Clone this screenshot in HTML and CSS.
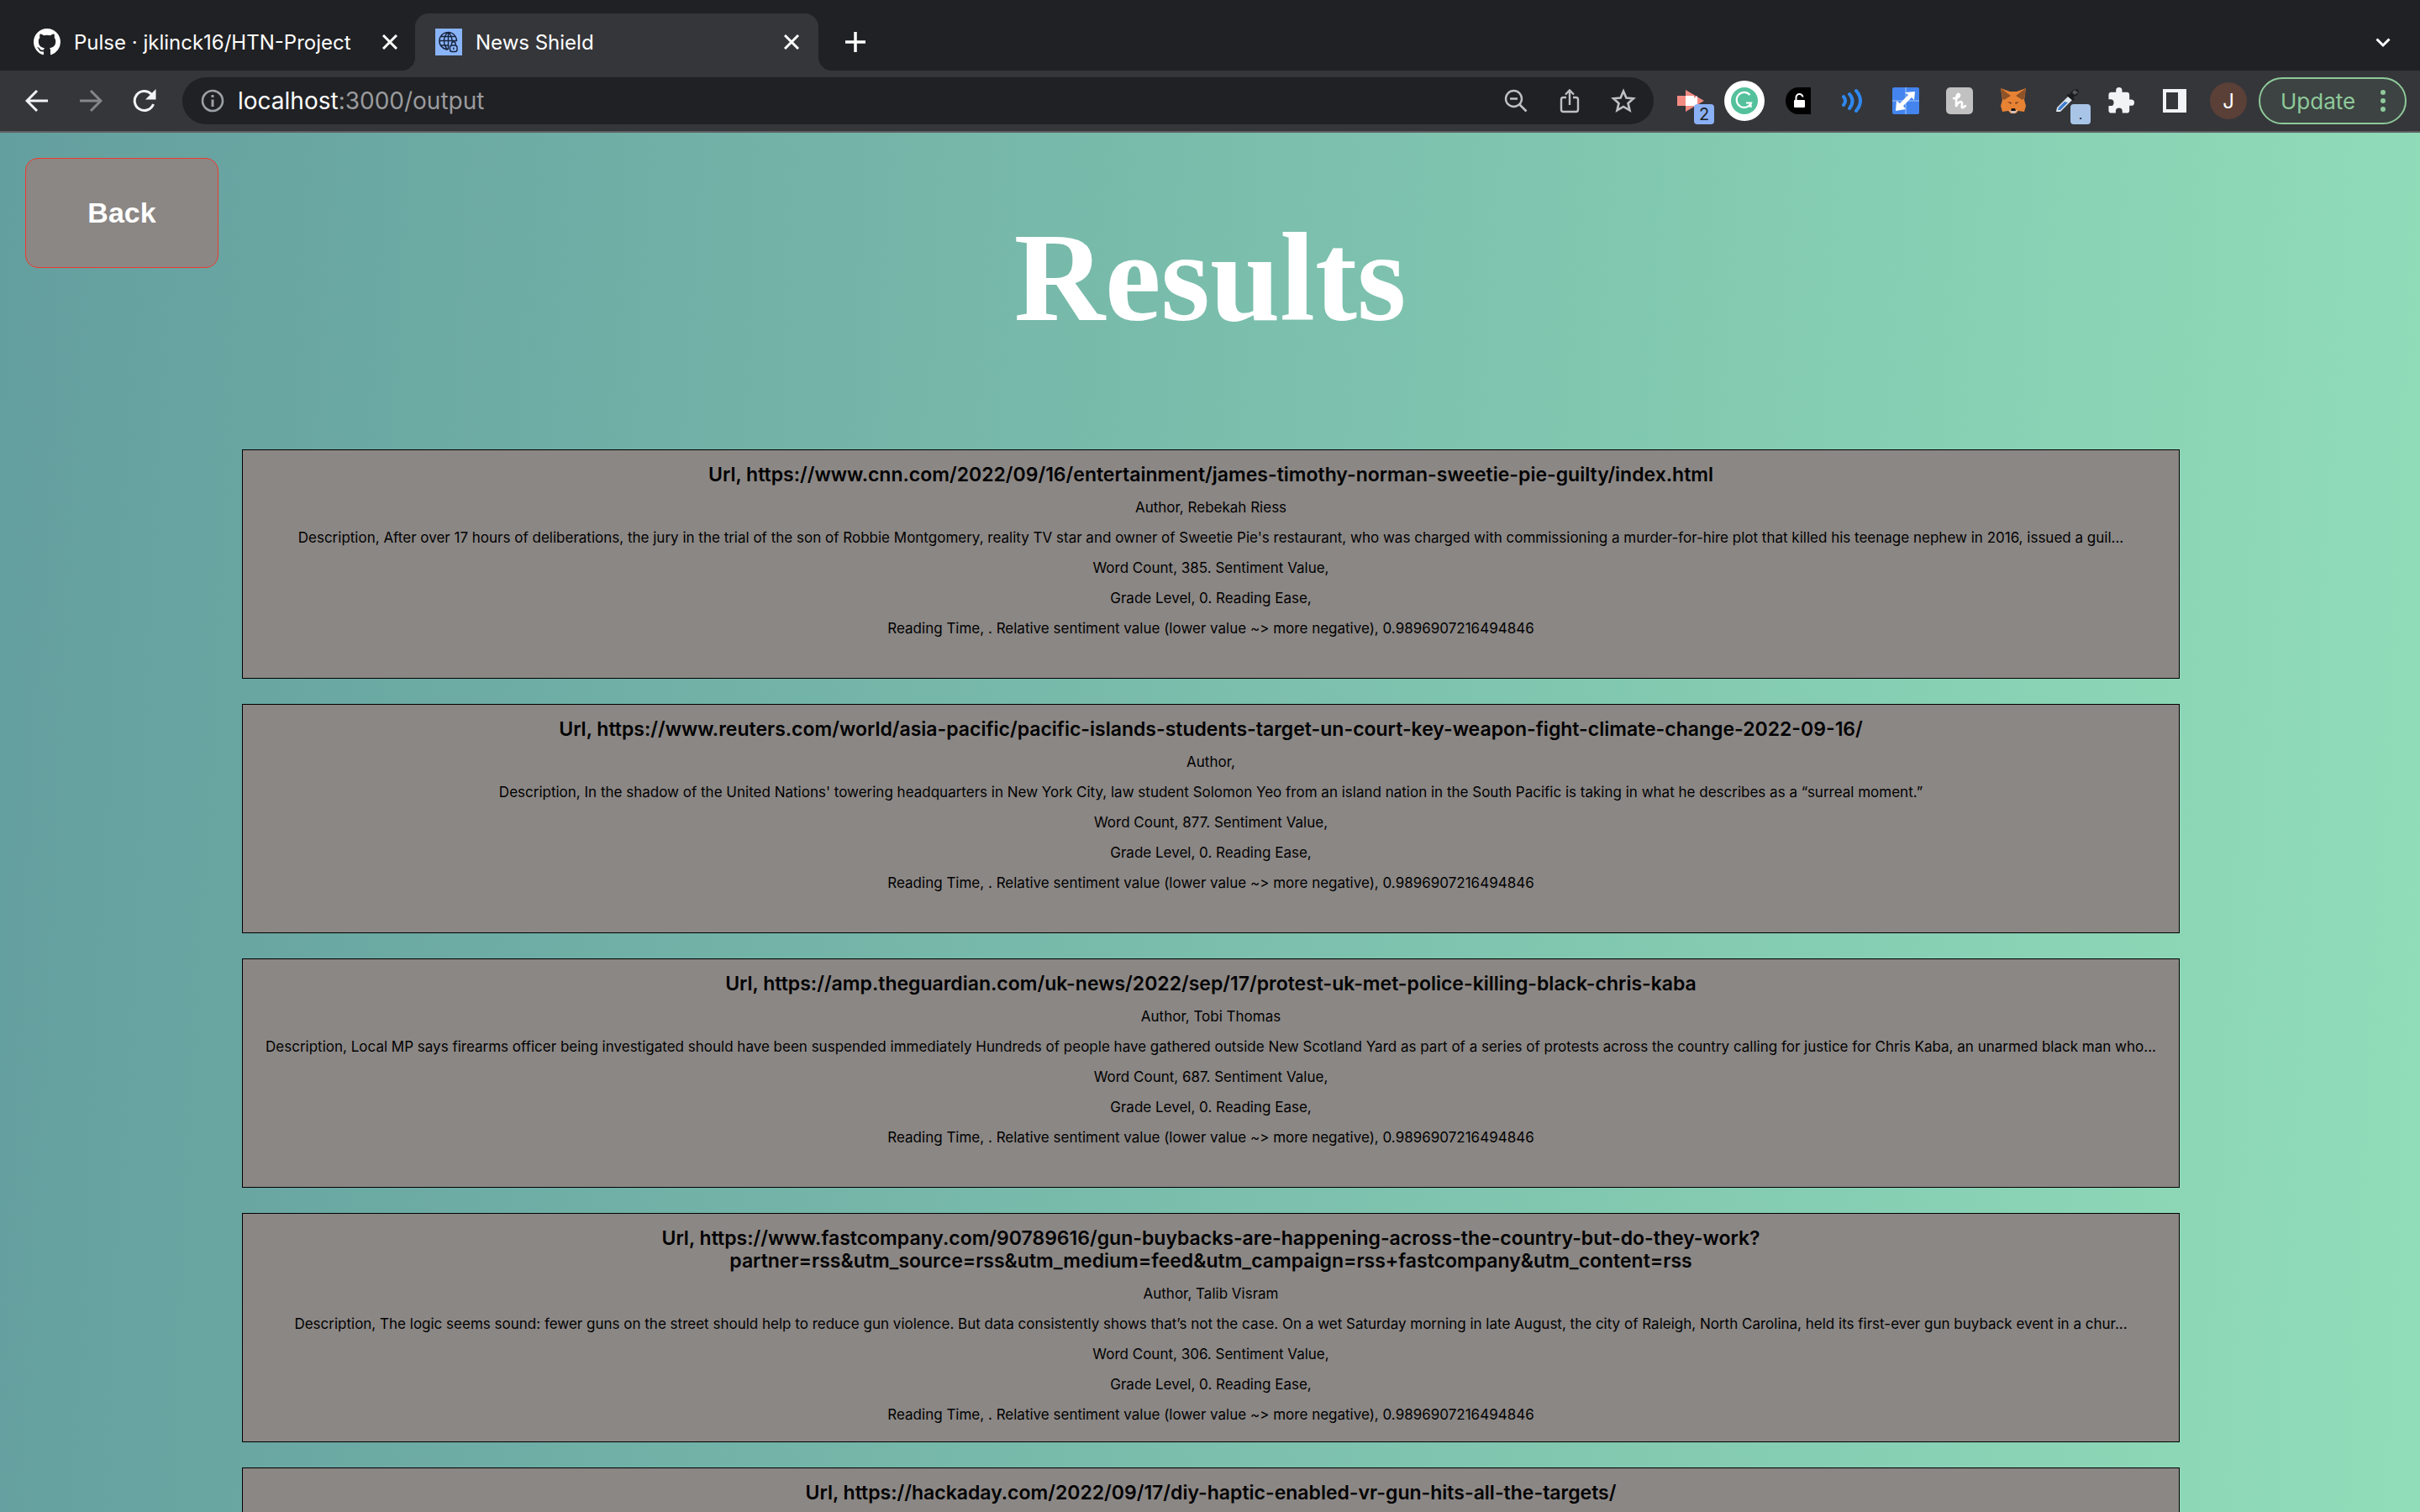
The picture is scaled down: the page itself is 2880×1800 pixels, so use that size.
FILE: index.html
```html
<!DOCTYPE html>
<html lang="en">
<head>
<meta charset="utf-8">
<title>News Shield</title>
<link rel="stylesheet" href="styles.css">
</head>
<body>
<header class="browser">
  <nav class="tabs" aria-label="Tabs">
    <div class="tab">
      <svg class="favicon" viewBox="0 0 16 16" fill="#fff"><path d="M8 0C3.58 0 0 3.58 0 8c0 3.54 2.29 6.53 5.47 7.59.4.07.55-.17.55-.38 0-.19-.01-.82-.01-1.49-2.01.37-2.53-.49-2.69-.94-.09-.23-.48-.94-.82-1.13-.28-.15-.68-.52-.01-.53.63-.01 1.08.58 1.23.82.72 1.21 1.87.87 2.33.66.07-.52.28-.87.51-1.07-1.78-.2-3.64-.89-3.64-3.95 0-.87.31-1.59.82-2.15-.08-.2-.36-1.02.08-2.12 0 0 .67-.21 2.2.82.64-.18 1.32-.27 2-.27s1.36.09 2 .27c1.53-1.04 2.2-.82 2.2-.82.44 1.1.16 1.92.08 2.12.51.56.82 1.27.82 2.15 0 3.07-1.87 3.75-3.65 3.95.29.25.54.73.54 1.48 0 1.07-.01 1.93-.01 2.2 0 .21.15.46.55.38A8.01 8.01 0 0 0 16 8c0-4.42-3.58-8-8-8z"/></svg>
      <span class="tab-title">Pulse · jklinck16/HTN-Project</span>
      <button class="icon-button" aria-label="Close tab"><svg width="18" height="18" viewBox="0 0 18 18"><path d="M1 1l16 16M17 1L1 17" stroke="#fff" stroke-width="3"/></svg></button>
    </div>
    <div class="tab tab-active">
      <svg class="favicon" viewBox="0 0 32 32"><rect width="32" height="32" fill="#8ab4f8"/><g fill="none" stroke="#16233c" stroke-width="1.4"><path d="M25.500 15A10.300 10.300 0 1 0 15 25M15.500 4.500V25M5 14.500h20.500M7 9.500h17M7 20h9.500M15 4.500c-6 5-6 15.500 0 20.500M15.500 4.500c3.500 3 4.500 6 4.500 11"/><rect x="17.500" y="20" width="8.500" height="7.500" rx="2.500"/><path d="M19.500 20v-2a2.300 2.300 0 0 1 4.600 0v2M21.800 22.500v2.500"/></g></svg>
      <span class="tab-title">News Shield</span>
      <button class="icon-button" aria-label="Close tab"><svg width="18" height="18" viewBox="0 0 18 18"><path d="M1 1l16 16M17 1L1 17" stroke="#fff" stroke-width="3"/></svg></button>
    </div>
    <button class="icon-button new-tab" aria-label="New tab"><svg width="24" height="24" viewBox="0 0 24 24"><path d="M12 0v24M0 12h24" stroke="#fff" stroke-width="3.500"/></svg></button>
    <button class="icon-button tab-search" aria-label="Search tabs"><svg width="18" height="12" viewBox="0 0 18 12"><path d="M1.500 1.500L9 9l7.500-7.500" fill="none" stroke="#fff" stroke-width="3"/></svg></button>
  </nav>
  <div class="toolbar">
    <div class="nav-buttons">
      <button class="icon-button" aria-label="Back"><svg width="28" height="28" viewBox="0 0 28 28"><path d="M27 14H3M14 2L2 14l12 12" fill="none" stroke="#f1f3f4" stroke-width="3"/></svg></button>
      <button class="icon-button" aria-label="Forward"><svg width="28" height="28" viewBox="0 0 28 28"><path d="M1 14h24M14 2l12 12-12 12" fill="none" stroke="#84868a" stroke-width="3"/></svg></button>
      <button class="icon-button" aria-label="Reload"><svg width="28" height="28" viewBox="0 0 28 28"><path d="M24.500 18A11.500 11.500 0 1 1 22 6l3 3" fill="none" stroke="#f1f3f4" stroke-width="3"/><path d="M27.500 0v12.500H15z" fill="#f1f3f4"/></svg></button>
    </div>
    <div class="omnibox">
      <svg width="28" height="28" viewBox="0 0 28 28"><circle cx="14" cy="14" r="12" fill="none" stroke="#9aa0a6" stroke-width="2.600"/><path d="M14 12.500V21M14 7v3" stroke="#9aa0a6" stroke-width="3"/></svg>
      <span class="address"><span class="host">localhost</span>:3000/output</span>
      <button class="icon-button" aria-label="Zoom"><svg width="28" height="28" viewBox="0 0 28 28"><circle cx="11.500" cy="11.500" r="9.500" fill="none" stroke="#bdc1c6" stroke-width="2.400"/><path d="M7 11.500h9M18.500 18.500l8 8" stroke="#bdc1c6" stroke-width="2.600"/></svg></button>
      <button class="icon-button" aria-label="Share"><svg width="28" height="30" viewBox="0 0 28 30"><path d="M10 11H6.500A2.500 2.500 0 0 0 4 13.500v12A2.500 2.500 0 0 0 6.500 28h15a2.500 2.500 0 0 0 2.500-2.500v-12a2.500 2.500 0 0 0-2.500-2.500H18M14 20V3M9 7.500l5-5 5 5" fill="none" stroke="#bdc1c6" stroke-width="2.400"/></svg></button>
      <button class="icon-button" aria-label="Bookmark"><svg width="30" height="30" viewBox="0 0 30 30"><path d="M15 3.500l3.400 8 8.600.7-6.500 5.700 2 8.500-7.500-4.500-7.500 4.500 2-8.500L3 12.200l8.600-.7z" fill="none" stroke="#bdc1c6" stroke-width="2.600"/></svg></button>
    </div>
    <div class="extensions">
      <button class="icon-button" aria-label="Video downloader"><svg width="32" height="32" viewBox="0 0 32 32"><path d="M0 10h10V3l22 13-22 13v-7H0z" fill="#f28b82"/><path d="M10 10h10v3l4-3v12H10z" fill="#fff"/></svg><span class="badge">2</span></button>
      <button class="icon-button" aria-label="Grammarly"><svg width="48" height="48" viewBox="0 0 48 48"><circle cx="24" cy="24" r="24" fill="#fff"/><circle cx="24" cy="24" r="16" fill="#54c19c"/><path d="M30.500 17A9 9 0 1 0 32 26.500h-6M31.500 26v6" fill="none" stroke="#fff" stroke-width="2.200"/></svg></button>
      <button class="icon-button" aria-label="Unlock"><svg width="32" height="32" viewBox="0 0 32 32"><path d="M16 0h15v32H16A15 16 0 0 1 16 0z"/><rect x="11" y="15" width="13" height="9" rx="1" fill="#fff"/><path d="M13.500 15v-2.500a4 4 0 0 1 8-1" fill="none" stroke="#fff" stroke-width="2"/></svg></button>
      <button class="icon-button" aria-label="Read aloud"><svg width="32" height="32" viewBox="0 0 32 32"><path d="M6 11q4 5 0 10M13 8q7 8 0 17M21 4q10 12 0 24" fill="none" stroke="#2f88f0" stroke-width="4" stroke-linecap="round"/></svg></button>
      <button class="icon-button" aria-label="Window resizer"><svg width="32" height="32" viewBox="0 0 32 32"><rect width="32" height="32" rx="2" fill="#4384ee"/><path d="M16 0v32M0 16h32" stroke="#a9c8fa"/><path d="M27 5l-1 10-3-3L13 22l3 4-12 2 1-12 4 3L19 9l-4-3z" fill="#fff"/></svg></button>
      <button class="icon-button" aria-label="Honey"><svg width="32" height="32" viewBox="0 0 32 32"><rect width="32" height="32" rx="5" fill="#c2c1c1"/><path d="M9 13c5 1 9-4 6-5s-3 7-3 15c1-5 7-8 7-4s-1 6 1 5l3-2" fill="none" stroke="#fff" stroke-width="2.600" stroke-linecap="round"/></svg></button>
      <button class="icon-button" aria-label="MetaMask"><svg width="32" height="32" viewBox="0 0 32 32"><path d="M1 1l11 4h8l11-4-2 14 2 7-2 7-7-1-3 3h-6l-3-3-7 1-2-7 2-7z" fill="#e88334"/><path d="M1 1l12 9-8 5-2-2zM31 1l-12 9 8 5 2-2z" fill="#8e5229"/><path d="M9 17l5 1-1 2zM23 17l-5 1 1 2z" fill="#723b1e"/><path d="M11 27l3 4h4l3-4z" fill="#d5bfb2"/><path d="M14 25h4l1 3h-6z" fill="#161616"/></svg></button>
      <button class="icon-button" aria-label="Color picker"><svg width="32" height="32" viewBox="0 0 32 32"><path d="M3 29l1-5L17 11l5 4L8 29z" fill="#dfe7ef"/><path d="M5 27l1-3 7-7 4 1-9 9z" fill="#3c7dcc"/><path d="M15 9l8 7 2-2-2-2 5-3q4-6-1-7-4 0-8 6z" fill="#1b1c1e"/><path d="M22 6l3-3 4 3-4 3z" fill="#55575a"/></svg><span class="badge badge-pale">.</span></button>
      <button class="icon-button" aria-label="Extensions"><svg width="32" height="32" viewBox="1 1 22 22" fill="#f1f3f4"><path d="M20.500 11H19V7c0-1.100-.9-2-2-2h-4V3.500a2.500 2.500 0 0 0-5 0V5H4c-1.100 0-2 .9-2 2v3.800h1.500a2.700 2.700 0 0 1 0 5.400H2V20c0 1.100.9 2 2 2h3.800v-1.500a2.700 2.700 0 0 1 5.400 0V22H17c1.100 0 2-.9 2-2v-4h1.500a2.500 2.500 0 0 0 0-5z"/></svg></button>
      <button class="icon-button" aria-label="Side panel"><svg width="28" height="28" viewBox="0 0 28 28"><path d="M0 0h28v28H0zM4 4v20h14V4z" fill="#f1f3f4" fill-rule="evenodd"/></svg></button>
      <button class="icon-button avatar">J</button>
    </div>
    <button class="update">Update<svg width="8" height="28" viewBox="0 0 8 28" fill="#8fc99a"><circle cx="4" cy="4" r="3"/><circle cx="4" cy="14" r="3"/><circle cx="4" cy="24" r="3"/></svg></button>
  </div>
</header>
<main class="page">
  <button class="back">Back</button>
  <h1 class="heading">Results</h1>
  <div class="results">
    <article class="card">
      <h2>Url, https://www.cnn.com/2022/09/16/entertainment/james-timothy-norman-sweetie-pie-guilty/index.html</h2>
      <p>Author, Rebekah Riess</p>
      <p>Description, After over 17 hours of deliberations, the jury in the trial of the son of Robbie Montgomery, reality TV star and owner of Sweetie Pie's restaurant, who was charged with commissioning a murder-for-hire plot that killed his teenage nephew in 2016, issued a guil...</p>
      <p>Word Count, 385. Sentiment Value,</p>
      <p>Grade Level, 0. Reading Ease,</p>
      <p>Reading Time, . Relative sentiment value (lower value ~&gt; more negative), 0.9896907216494846</p>
    </article>
    <article class="card">
      <h2>Url, https://www.reuters.com/world/asia-pacific/pacific-islands-students-target-un-court-key-weapon-fight-climate-change-2022-09-16/</h2>
      <p>Author,</p>
      <p>Description, In the shadow of the United Nations' towering headquarters in New York City, law student Solomon Yeo from an island nation in the South Pacific is taking in what he describes as a “surreal moment.”</p>
      <p>Word Count, 877. Sentiment Value,</p>
      <p>Grade Level, 0. Reading Ease,</p>
      <p>Reading Time, . Relative sentiment value (lower value ~&gt; more negative), 0.9896907216494846</p>
    </article>
    <article class="card">
      <h2>Url, https://amp.theguardian.com/uk-news/2022/sep/17/protest-uk-met-police-killing-black-chris-kaba</h2>
      <p>Author, Tobi Thomas</p>
      <p>Description, Local MP says firearms officer being investigated should have been suspended immediately Hundreds of people have gathered outside New Scotland Yard as part of a series of protests across the country calling for justice for Chris Kaba, an unarmed black man who...</p>
      <p>Word Count, 687. Sentiment Value,</p>
      <p>Grade Level, 0. Reading Ease,</p>
      <p>Reading Time, . Relative sentiment value (lower value ~&gt; more negative), 0.9896907216494846</p>
    </article>
    <article class="card">
      <h2>Url, https://www.fastcompany.com/90789616/gun-buybacks-are-happening-across-the-country-but-do-they-work?<br>partner=rss&amp;utm_source=rss&amp;utm_medium=feed&amp;utm_campaign=rss+fastcompany&amp;utm_content=rss</h2>
      <p>Author, Talib Visram</p>
      <p>Description, The logic seems sound: fewer guns on the street should help to reduce gun violence. But data consistently shows that’s not the case. On a wet Saturday morning in late August, the city of Raleigh, North Carolina, held its first-ever gun buyback event in a chur...</p>
      <p>Word Count, 306. Sentiment Value,</p>
      <p>Grade Level, 0. Reading Ease,</p>
      <p>Reading Time, . Relative sentiment value (lower value ~&gt; more negative), 0.9896907216494846</p>
    </article>
    <article class="card">
      <h2>Url, https://hackaday.com/2022/09/17/diy-haptic-enabled-vr-gun-hits-all-the-targets/</h2>
    </article>
  </div>
</main>
</body>
</html>
```
FILE: styles.css
```css
* {
  box-sizing: border-box;
}

body {
  margin: 0;
  height: 100vh;
  overflow: hidden;
  display: flex;
  flex-direction: column;
  font-family: Inter, "Liberation Sans", sans-serif;
}

button {
  font-family: inherit;
  cursor: pointer;
}

svg {
  display: block;
  flex: none;
}

.browser {
  flex: none;
  color: #fff;
  border-bottom: 2px solid #5f6063;
}

.tabs {
  display: flex;
  height: 84px;
  padding: 16px 32px 0 14px;
  background: #202124;
}

.tab {
  display: flex;
  align-items: center;
  gap: 16px;
  width: 480px;
  padding: 0 20px 0 24px;
  border-radius: 16px 16px 0 0;
  font-size: 24px;
}

.tab:first-child {
  padding-right: 18px;
  padding-left: 26px;
}

.tab-active {
  position: relative;
  background: #35363a;
}

.tab-active::before,
.tab-active::after {
  content: "";
  position: absolute;
  bottom: 0;
  width: 16px;
  height: 16px;
}

.tab-active::before {
  right: 100%;
  background: radial-gradient(circle at 0 0, transparent 16px, #35363a 16px);
}

.tab-active::after {
  left: 100%;
  background: radial-gradient(circle at 100% 0, transparent 16px, #35363a 16px);
}

.favicon {
  width: 32px;
  height: 32px;
}

.tab-title {
  flex: 1;
  white-space: nowrap;
}

.icon-button {
  position: relative;
  display: grid;
  place-items: center;
  flex: none;
  width: 24px;
  padding: 0;
  border: 0;
  background: none;
  color: #fff;
}

.new-tab {
  margin-left: 32px;
}

.tab-search {
  margin-left: auto;
  padding-top: 2px;
}

.toolbar {
  display: flex;
  align-items: center;
  height: 72px;
  padding-right: 16px;
  background: #35363a;
}

.nav-buttons {
  display: flex;
  padding: 0 13px 0 12px;
}

.nav-buttons .icon-button {
  width: 64px;
}

.omnibox {
  display: flex;
  flex: 1;
  align-items: center;
  height: 56px;
  padding: 0 4px 0 22px;
  border-radius: 28px;
  background: #202124;
}

.address {
  flex: 1;
  padding-left: 16px;
  font-size: 28px;
  color: #9a9b9e;
}

.host {
  color: #fff;
}

.omnibox .icon-button {
  width: 64px;
}

.extensions {
  display: flex;
  padding: 0 4px 0 12px;
}

.extensions .icon-button {
  width: 64px;
  height: 56px;
}

.badge {
  position: absolute;
  right: 4px;
  bottom: 0;
  width: 24px;
  height: 24px;
  border-radius: 4px;
  background: #8ab0f5;
  color: #202124;
  font-size: 20px;
  line-height: 24px;
  text-align: center;
}

.badge-pale {
  background: #a8c5e8;
  font-size: 16px;
}

.extensions .avatar {
  width: 44px;
  height: 44px;
  margin: 6px 10px;
  border-radius: 50%;
  background: #5a4037;
  font-size: 24px;
}

.update {
  display: flex;
  align-items: center;
  justify-content: space-between;
  width: 176px;
  height: 56px;
  padding: 0 22px 0 24px;
  border: 2px solid #8fc99a;
  border-radius: 28px;
  background: #3c4342;
  color: #8fc99a;
  font-size: 26px;
}

.page {
  flex: 1;
  min-height: 0;
  overflow: hidden;
  display: flex;
  flex-direction: column;
  padding-top: 30px;
  background: linear-gradient(93deg, #649f9f, #91ddb9);
}

.back {
  flex: none;
  width: 230px;
  height: 131px;
  margin-left: 30px;
  border: 1px solid #f03a2c;
  border-radius: 15px;
  background: #8b8785;
  color: #fff;
  font: bold 34px "Liberation Sans", sans-serif;
}

.heading {
  margin: -70px 0 124px;
  color: #fff;
  font: bold 150px/162px "Liberation Serif", serif;
  text-align: center;
  pointer-events: none;
}

.results {
  display: flex;
  flex-direction: column;
  gap: 30px;
  width: 80%;
  margin-left: 10%;
}

.card {
  box-sizing: content-box;
  flex: none;
  width: 100%;
  height: 255px;
  padding-top: 16px;
  border: 1px solid #000;
  background: #8b8785;
  color: #000;
  text-align: center;
}

.card h2 {
  margin: 0 0 15px;
  font-size: 23px;
  font-weight: 600;
  line-height: 27px;
}

.card p {
  margin: 0 0 15px;
  font-size: 17px;
  line-height: 21px;
  white-space: nowrap;
}
```
